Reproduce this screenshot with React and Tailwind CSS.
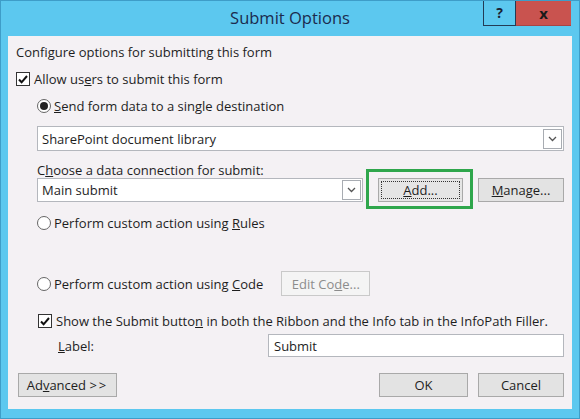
import React from "react";

function CheckBox() {
  return (
    <span className="flex h-[14px] w-[14px] shrink-0 items-center justify-center border border-[#333] bg-white">
      <svg width="10" height="9" viewBox="0 0 10 9">
        <path d="M1 4.5l2.6 2.8L9 1" fill="none" stroke="#111" strokeWidth="2" />
      </svg>
    </span>
  );
}

function Radio({ checked }) {
  return (
    <span className="flex h-[14px] w-[14px] shrink-0 items-center justify-center rounded-full border border-[#666] bg-white">
      {checked && <span className="h-[8px] w-[8px] rounded-full bg-[#222]" />}
    </span>
  );
}

function Arrow() {
  return (
    <span className="flex h-[20px] w-[19px] items-center justify-center border border-[#a8acb2] bg-white">
      <svg width="9" height="6" viewBox="0 0 9 6">
        <path d="M1 1l3.5 3.5L8 1" fill="none" stroke="#555" strokeWidth="1.3" />
      </svg>
    </span>
  );
}

function Select({ value, className }) {
  return (
    <div className={`flex items-center justify-between border border-[#b4b7bd] bg-white pl-[4px] pr-[1px] ${className}`}>
      <span>{value}</span>
      <Arrow />
    </div>
  );
}

function Button({ children, className }) {
  return (
    <button className={`flex h-[24px] items-center justify-center border border-[#a9a9a9] bg-[#e3e3e3] text-[#1e1e1e] ${className}`}>
      {children}
    </button>
  );
}

function App() {
  return (
    <div
      className="box-border flex h-[419px] w-[580px] flex-col border border-[#3e9dc8] bg-[#5cc8ef] px-[7px] pb-[9px] text-[13px] leading-[18px] text-[#1e1e1e]"
      style={{ fontFamily: '"Open Sans", "Noto Sans", sans-serif' }}
    >
      <div className="grid h-[35px] grid-cols-[1fr_auto_1fr]">
        <div />
        <div className="pt-[6px] text-[16.5px] leading-[22px] text-[#1b2b4e]">Submit Options</div>
        <div className="flex justify-self-end pr-[1px]">
          <span className="flex h-[25px] w-[33px] items-center justify-center border-x border-b border-[#233b55] text-[14px] font-bold text-[#1a2233]">
            ?
          </span>
          <span className="flex h-[25px] w-[55px] items-center justify-center border-b border-[#a84444] bg-[#c9534f] text-[15px] font-bold text-[#1a1a1a]">
            x
          </span>
        </div>
      </div>

      <div className="flex flex-1 flex-col bg-[#f4f1f4] pl-[8px] pr-[8px] pt-[7px]">
        <div className="flex h-[18px] items-center">Configure options for submitting this form</div>

        <div className="mt-[9px] flex h-[18px] items-center gap-[4px]">
          <CheckBox />
          <span>
            Allow us<u>e</u>rs to submit this form
          </span>
        </div>

        <div className="ml-[21px] mt-[9px] flex h-[18px] items-center gap-[3px]">
          <Radio checked />
          <span>
            <u>S</u>end form data to a single destination
          </span>
        </div>

        <Select value="SharePoint document library" className="ml-[21px] mt-[11px] h-[25px]" />

        <div className="ml-[21px] mt-[10px] flex h-[17px] items-center">
          C<u>h</u>oose a data connection for submit:
        </div>

        <div className="ml-[21px] flex h-[24px] items-center">
          <Select value="Main submit" className="h-[24px] w-[326px]" />
          <div className="relative ml-[15px]">
            <Button className="w-[85px] items-stretch border-[#3c7fb1] bg-[#e5e5e5] p-[2px]">
              <span className="flex flex-1 items-center justify-center border border-dotted border-[#333]">
                <u>A</u>dd...
              </span>
            </Button>
            <span className="pointer-events-none absolute -bottom-[7px] -left-[12px] -right-[10px] -top-[9px] border-[3px] border-[#2fa64c]" />
          </div>
          <Button className="ml-auto w-[86px]">
            <u>M</u>anage...
          </Button>
        </div>

        <div className="ml-[21px] mt-[12px] flex h-[18px] items-center gap-[3px]">
          <Radio />
          <span>
            Perform custom action using <u>R</u>ules
          </span>
        </div>

        <div className="ml-[21px] mt-[39px] flex h-[25px] items-center">
          <Radio />
          <span className="ml-[3px]">
            Perform custom action using <u>C</u>ode
          </span>
          <button className="ml-[18px] h-[25px] w-[89px] border border-[#c9c9c9] bg-[#f4f4f4] text-[#8c8c8c]">
            Edit Co<u>d</u>e...
          </button>
        </div>

        <div className="ml-[22px] mt-[16px] flex h-[18px] items-center gap-[4px]">
          <CheckBox />
          <span>
            Show the Submit butto<u>n</u> in both the Ribbon and the Info tab in the InfoPath Filler.
          </span>
        </div>

        <div className="ml-[42px] mt-[4px] flex h-[23px] items-center">
          <span className="w-[210px]">
            <u>L</u>abel:
          </span>
          <div className="flex h-[23px] flex-1 items-center border border-[#b4b7bd] bg-white pl-[5px]">Submit</div>
        </div>

        <div className="mt-[16px] flex h-[24px] items-center">
          <Button className="ml-[2px] w-[99px]">
            <span>
              Ad<u>v</u>anced <span className="tracking-[2px]">&gt;&gt;</span>
            </span>
          </Button>
          <Button className="ml-auto w-[89px]">OK</Button>
          <Button className="ml-[10px] w-[86px]">Cancel</Button>
        </div>
      </div>
    </div>
  );
}

export default App;
